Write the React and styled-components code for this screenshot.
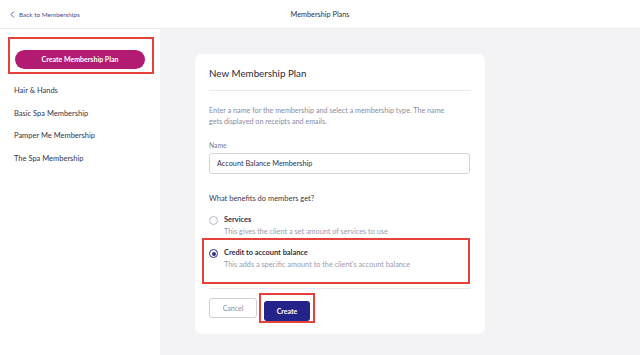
import React from 'react';
import styled, { createGlobalStyle } from 'styled-components';

const GlobalStyle = createGlobalStyle`
  html, body { margin: 0; padding: 0; }
  body {
    font-family: Lato, "Noto Sans", sans-serif;
    background: #ffffff;
  }
`;

const Page = styled.div`
  width: 640px;
  height: 355px;
  display: flex;
  flex-direction: column;
  overflow: hidden;
`;

const TopBar = styled.header`
  height: 28px;
  flex-shrink: 0;
  display: grid;
  grid-template-columns: 1fr auto 1fr;
  align-items: center;
  padding: 0 10px;
  background: #fff;
  border-bottom: 1px solid #ececf0;
`;

const BackLink = styled.a`
  display: flex;
  align-items: center;
  gap: 4px;
  font-size: 6.4px;
  color: #4b4b93;
  text-decoration: none;
`;

const Heading = styled.div`
  font-size: 7.3px;
  color: #2f2f40;
`;

const Body = styled.div`
  flex: 1;
  display: flex;
`;

const Sidebar = styled.aside`
  width: 160px;
  flex-shrink: 0;
  background: #fff;
  padding-top: 8px;
`;

const Highlight = styled.div`
  border: 2px solid #e5423c;
  box-sizing: border-box;
`;

const CreateBox = styled(Highlight)`
  margin-left: 8px;
  width: 146px;
  height: 37px;
  padding: 7px 0 0 5px;
`;

const PinkButton = styled.button`
  width: 130px;
  height: 19px;
  border: none;
  border-radius: 10px;
  background: #b31b72;
  color: #fff;
  font-family: inherit;
  font-weight: 700;
  font-size: 7px;
  padding: 0;
`;

const PlanList = styled.ul`
  list-style: none;
  margin: 11px 0 0;
  padding: 0 0 0 14px;
`;

const PlanItem = styled.li`
  font-size: 7.5px;
  color: #34344a;
  height: 22.5px;
  line-height: 12px;
`;

const Main = styled.main`
  flex: 1;
  background: #f3f3f6;
  padding: 25px 0 0 35px;
`;

const Card = styled.section`
  width: 290px;
  height: 280px;
  box-sizing: border-box;
  background: #fff;
  border-radius: 7px;
  padding: 13px 14px 0 14px;
`;

const CardTitle = styled.h2`
  margin: 0;
  font-weight: 400;
  font-size: 9.8px;
  color: #2a2a3c;
  padding-bottom: 11px;
  border-bottom: 1px solid #e8e8ee;
`;

const Description = styled.p`
  margin: 14px 0 0;
  font-size: 7.2px;
  line-height: 11px;
  color: #8b8ba3;
`;

const Label = styled.div`
  margin-top: 14px;
  font-size: 6.8px;
  color: #7c7c90;
`;

const TextInput = styled.input`
  margin-top: 4px;
  width: 261px;
  height: 21px;
  box-sizing: border-box;
  border: 1px solid #d4d4dc;
  border-radius: 3px;
  padding: 0 7px;
  font-family: inherit;
  font-size: 7.3px;
  color: #33334a;
`;

const Question = styled.div`
  margin-top: 20px;
  font-size: 7.5px;
  color: #3a3a4e;
`;

const Option = styled.div`
  display: flex;
  align-items: flex-start;
  gap: 6px;
  padding: ${p => (p.$boxed ? '7px 0 0 5px' : '11px 0 0 0')};
  height: ${p => (p.$boxed ? '42px' : 'auto')};
  box-sizing: border-box;
`;

const OptionBox = styled(Highlight)`
  margin: 0 0 0 -7px;
  width: 268px;
`;

const Radio = styled.span`
  width: 9px;
  height: 9px;
  box-sizing: border-box;
  flex-shrink: 0;
  margin-top: 2px;
  border-radius: 50%;
  border: 1px solid ${p => (p.$checked ? '#2d2d8c' : '#b8b8c8')};
  display: flex;
  align-items: center;
  justify-content: center;
  &::after {
    content: '';
    width: 4px;
    height: 4px;
    border-radius: 50%;
    background: ${p => (p.$checked ? '#2d2d8c' : 'transparent')};
  }
`;

const OptionTitle = styled.div`
  font-size: 7.4px;
  font-weight: 700;
  color: #2f2f44;
  line-height: 12px;
`;

const OptionNote = styled.div`
  font-size: 7.3px;
  color: #9a9ab0;
  line-height: 12px;
`;

const Footer = styled.div`
  margin-top: 4px;
  border-top: 1px solid #e8e8ee;
  padding-top: 4px;
  display: flex;
  align-items: center;
  gap: 2px;
`;

const CancelButton = styled.button`
  width: 48px;
  height: 20px;
  border: 1px solid #cfcfd9;
  border-radius: 3px;
  background: #fff;
  color: #8c8ca0;
  font-family: inherit;
  font-size: 7px;
  padding: 0;
`;

const SubmitBox = styled(Highlight)`
  width: 56px;
  height: 30px;
  padding: 3px 0 0 3px;
`;

const SubmitButton = styled.button`
  width: 46px;
  height: 20px;
  border: none;
  border-radius: 3px;
  background: #24238a;
  color: #fff;
  font-family: inherit;
  font-weight: 700;
  font-size: 7px;
  padding: 0;
`;

const plans = ['Hair & Hands', 'Basic Spa Membership', 'Pamper Me Membership', 'The Spa Membership'];

export default function App() {
  return (
    <Page>
      <GlobalStyle />
      <TopBar>
        <BackLink href="#">
          <svg width="5" height="7" viewBox="0 0 5 7" fill="none">
            <path d="M4 0.5 L1 3.5 L4 6.5" stroke="#4b4b93" strokeWidth="0.9" />
          </svg>
          Back to Memberships
        </BackLink>
        <Heading>Membership Plans</Heading>
        <span />
      </TopBar>
      <Body>
        <Sidebar>
          <CreateBox>
            <PinkButton>Create Membership Plan</PinkButton>
          </CreateBox>
          <PlanList>
            {plans.map(p => (
              <PlanItem key={p}>{p}</PlanItem>
            ))}
          </PlanList>
        </Sidebar>
        <Main>
          <Card>
            <CardTitle>New Membership Plan</CardTitle>
            <Description>
              Enter a name for the membership and select a membership type. The name
              <br />
              gets displayed on receipts and emails.
            </Description>
            <Label>Name</Label>
            <TextInput defaultValue="Account Balance Membership" />
            <Question>What benefits do members get?</Question>
            <Option>
              <Radio />
              <div>
                <OptionTitle>Services</OptionTitle>
                <OptionNote>This gives the client a set amount of services to use</OptionNote>
              </div>
            </Option>
            <OptionBox>
              <Option $boxed>
                <Radio $checked />
                <div>
                  <OptionTitle>Credit to account balance</OptionTitle>
                  <OptionNote>This adds a specific amount to the client's account balance</OptionNote>
                </div>
              </Option>
            </OptionBox>
            <Footer>
              <CancelButton>Cancel</CancelButton>
              <SubmitBox>
                <SubmitButton>Create</SubmitButton>
              </SubmitBox>
            </Footer>
          </Card>
        </Main>
      </Body>
    </Page>
  );
}
